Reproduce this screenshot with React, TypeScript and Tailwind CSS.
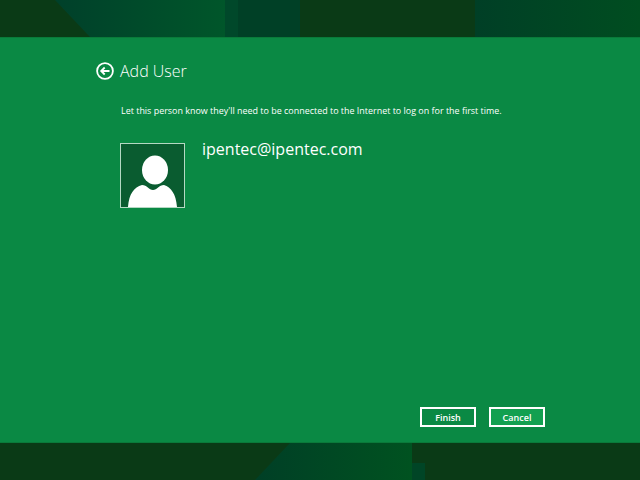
export default function App() {
  return (
    <div className="flex flex-col w-[640px] h-[480px] overflow-hidden bg-[#0a8944] text-white font-['Open_Sans','Noto_Sans',sans-serif]">
      <div className="h-[38px] shrink-0 bg-[#0a3a16] border-b border-[#0a7a3a]">
        <svg width="640" height="37" className="block">
          <defs>
            <linearGradient id="a" x1="0" x2="1" y1="0" y2="0">
              <stop offset="0" stopColor="#00402a" />
              <stop offset="1" stopColor="#00562a" />
            </linearGradient>
            <linearGradient id="b" x1="0" x2="1" y1="0" y2="0">
              <stop offset="0" stopColor="#003f26" />
              <stop offset="1" stopColor="#004d20" />
            </linearGradient>
          </defs>
          <polygon points="55,0 225,0 225,37 90,37" fill="url(#a)" />
          <rect x="225" y="0" width="13" height="37" fill="#00482a" />
          <rect x="238" y="0" width="62" height="37" fill="#004026" />
          <rect x="475" y="0" width="165" height="37" fill="url(#b)" />
        </svg>
      </div>
      <div className="flex-1 flex flex-col pl-[96px] pr-[95px] pt-[22px] pb-[15px]">
        <div className="flex items-center gap-[6px] h-[22px]">
          <svg width="18" height="18" viewBox="0 0 18 18" fill="none" stroke="white" className="shrink-0">
            <circle cx="9" cy="9" r="7.9" strokeWidth="1.8" />
            <path d="M13.500 9H5.500M8.700 5.500 5.200 9l3.500 3.500" strokeWidth="1.8" />
          </svg>
          <div className="text-[16px] font-light leading-[22px]">Add User</div>
        </div>
        <div className="mt-[22px] ml-[25px] text-[8.95px] leading-[14px] whitespace-nowrap">
          Let this person know they'll need to be connected to the Internet to log on for the first time.
        </div>
        <div className="mt-[25px] ml-[24px] flex gap-[17px]">
          <div className="w-[65px] h-[65px] border border-[#b5d8c3] bg-[#0a5c30]">
            <svg width="63" height="63" viewBox="0 0 63 63" className="block">
              <ellipse cx="34" cy="26" rx="13" ry="14.500" fill="white" />
              <path d="M7 63C8 50 13 43 21 41C26 41 28 46 32 46C36 46 38 41 43 41C50 43 55 50 56 63Z" fill="white" />
            </svg>
          </div>
          <div className="text-[16px] leading-[12px]">ipentec@ipentec.com</div>
        </div>
        <div className="mt-auto flex justify-end gap-[13px]">
          <button className="w-[56px] h-[20px] border-2 border-white bg-[#0a8944] text-[9px] font-semibold leading-none">Finish</button>
          <button className="w-[56px] h-[20px] border-2 border-white bg-[#12a050] text-[9px] font-semibold leading-none">Cancel</button>
        </div>
      </div>
      <div className="h-[38px] shrink-0 bg-[#0a3a16] border-t border-[#0a7a3a]">
        <svg width="640" height="37" className="block">
          <defs>
            <linearGradient id="c" x1="0" x2="1" y1="0" y2="0">
              <stop offset="0" stopColor="#003f26" />
              <stop offset="1" stopColor="#005220" />
            </linearGradient>
          </defs>
          <polygon points="290,0 412,0 412,37 255,37" fill="url(#c)" />
          <rect x="412" y="20" width="13" height="17" fill="#004526" />
        </svg>
      </div>
    </div>
  );
}
